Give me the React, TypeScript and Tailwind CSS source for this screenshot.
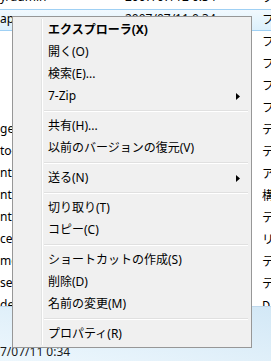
import React from "react";

type Row = { name: string; date: string; type: string; selected?: boolean };

const rows: Row[] = [
  { name: "y/admin", date: "2007/07/12 0:34", type: "フ" },
  { name: "ap", date: "2007/07/11 0:34", type: "フ", selected: true },
  { name: "", date: "", type: "フ" },
  { name: "", date: "", type: "フ" },
  { name: "", date: "", type: "フ" },
  { name: "", date: "", type: "フ" },
  { name: "gel", date: "", type: "テ" },
  { name: "to-", date: "", type: "テ" },
  { name: "ntR", date: "", type: "ア" },
  { name: "ntR", date: "", type: "構" },
  { name: "ntR", date: "", type: "テ" },
  { name: "ce]", date: "", type: "リ" },
  { name: "me", date: "", type: "テ" },
  { name: "se", date: "", type: "テ" },
  { name: "de", date: "", type: "D" },
];

type Item =
  | { kind: "item"; label: string; bold?: boolean; sub?: boolean }
  | { kind: "sep" };

const items: Item[] = [
  { kind: "item", label: "エクスプローラ(X)", bold: true },
  { kind: "item", label: "開く(O)" },
  { kind: "item", label: "検索(E)..." },
  { kind: "item", label: "7-Zip", sub: true },
  { kind: "sep" },
  { kind: "item", label: "共有(H)..." },
  { kind: "item", label: "以前のバージョンの復元(V)" },
  { kind: "sep" },
  { kind: "item", label: "送る(N)", sub: true },
  { kind: "sep" },
  { kind: "item", label: "切り取り(T)" },
  { kind: "item", label: "コピー(C)" },
  { kind: "sep" },
  { kind: "item", label: "ショートカットの作成(S)" },
  { kind: "item", label: "削除(D)" },
  { kind: "item", label: "名前の変更(M)" },
  { kind: "sep" },
  { kind: "item", label: "プロパティ(R)" },
];

function Arrow() {
  return (
    <svg width="4" height="7" viewBox="0 0 4 7" className="block">
      <polygon points="0,0 4,3.5 0,7" fill="#000" />
    </svg>
  );
}

export default function App() {
  return (
    <div className="relative w-[271px] h-[361px] overflow-hidden bg-white font-['Noto_Sans','Noto_Sans_CJK_JP',sans-serif] text-[12px] text-black">
      {/* file list */}
      <div className="h-[306px] overflow-hidden">
        <div className="-mt-[13px] flex flex-col">
          {rows.map((r, i) => (
            <div
              key={i}
              className={
                r.selected
                  ? "flex h-[22px] items-center border-y border-[#9fd0f4] bg-gradient-to-b from-[#f1f9fe] to-[#dcf0fc] pb-[3px] whitespace-nowrap"
                  : "flex h-[22px] items-center pb-[3px] whitespace-nowrap"
              }
            >
              <div className="w-[125px] overflow-hidden leading-[16px]">{r.name}</div>
              <div className="w-[137px] overflow-hidden leading-[16px]">{r.date}</div>
              <div className="flex-1 overflow-hidden leading-[16px] font-['Noto_Sans_CJK_JP',sans-serif]">
                {r.type}
              </div>
            </div>
          ))}
        </div>
      </div>

      {/* details pane */}
      <div className="h-[55px] border-t border-[#bfd8ec] bg-gradient-to-tr from-[#edf7fd] to-[#d3e8f6] pt-[37px]">
        <div className="leading-[16px] whitespace-nowrap text-[#1a1a1a]">7/07/11 0:34</div>
      </div>

      {/* context menu */}
      <div className="absolute left-[12px] top-[16px] w-[240px] h-[332px] border border-[#979797] bg-[#f0f0f0] p-[2px]">
        <div className="flex h-full">
          <div className="w-[27px] border-r border-[#e2e3e3]" />
          <div className="w-[1px] bg-white" />
          <div className="flex flex-1 flex-col">
            {items.map((it, i) =>
              it.kind === "sep" ? (
                <div key={i} className="flex h-[8px] items-center pl-[1px] pr-[1px]">
                  <div className="h-[2px] w-full border-t border-[#e0e0e0] bg-white" />
                </div>
              ) : (
                <div
                  key={i}
                  className="flex h-[22px] items-center justify-between pl-[5px] pr-[9px] whitespace-nowrap"
                >
                  <span className={it.bold ? "font-bold leading-[16px]" : "leading-[16px]"}>
                    {it.label}
                  </span>
                  {it.sub ? <Arrow /> : null}
                </div>
              )
            )}
          </div>
        </div>
      </div>
    </div>
  );
}
